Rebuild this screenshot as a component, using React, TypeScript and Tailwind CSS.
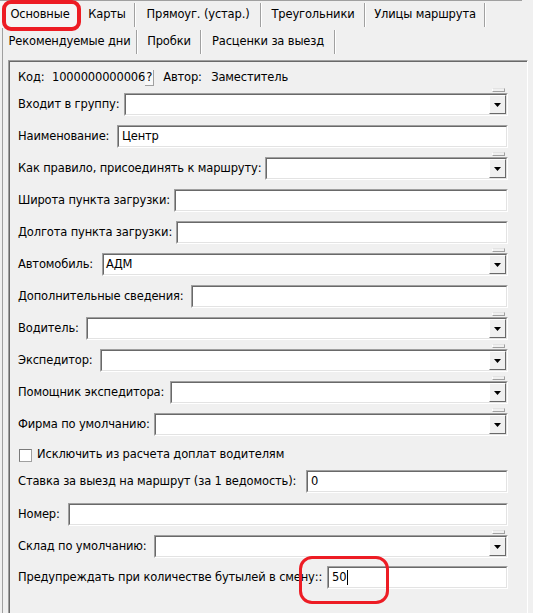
import React from "react";

const F = "font-['DejaVu_Sans',sans-serif]";

function Sunken({ children, className = "" }: { children?: React.ReactNode; className?: string }) {
  return (
    <div className={`h-[23px] border-t border-l border-t-[#a0a0a0] border-l-[#a0a0a0] border-b border-r border-b-white border-r-white ${className}`}>
      <div className="h-full border-t border-l border-t-[#696969] border-l-[#696969] border-b border-r border-b-[#e3e3e3] border-r-[#e3e3e3] bg-white flex items-center pl-[2px] relative">
        {children}
      </div>
    </div>
  );
}

function Combo({ value }: { value?: string }) {
  return (
    <div className="flex-1 relative">
      <Sunken>
        <span className="flex-1">{value}</span>
        <div className="w-[17px] h-[19px] mr-0 bg-[#f0f0f0] border-t border-l border-t-white border-l-white border-b border-r border-b-[#696969] border-r-[#696969] flex items-center justify-center">
          <svg width="7" height="4" viewBox="0 0 7 4"><path d="M0 0h7L3.5 4z" fill="#000" /></svg>
        </div>
      </Sunken>
      <div className="absolute right-[3px] top-[-5px] w-[13px] h-[4px] bg-[#f0f0f0] border-t border-t-[#e3e3e3] border-b border-b-[#a0a0a0] border-l border-l-white border-r border-r-[#a0a0a0]" />
    </div>
  );
}

function Row({ label, w, mt, children }: { label: string; w: number; mt: string; children: React.ReactNode }) {
  return (
    <div className={`flex items-center h-[23px] ${mt}`}>
      <div className="whitespace-nowrap shrink-0" style={{ width: w }}>{label}</div>
      {children}
    </div>
  );
}

export default function App() {
  const tab = "flex items-center justify-center whitespace-nowrap h-full";
  const sep = "w-[2px] h-[24px] border-l border-l-[#a0a0a0] border-r border-r-white self-center";
  return (
    <div className={`w-[533px] h-[613px] bg-[#f0f0f0] relative overflow-hidden text-[11.5px] tracking-[-0.15px] text-black ${F}`}>
      {/* top line */}
      <div className="h-[1px] w-[522px] bg-[#a0a0a0]" />
      {/* tab row 1 */}
      <div className="flex h-[27px]">
        <div className={`${tab} w-[80px] bg-[#f5f5f5]`}>Основные</div>
        <div className={`${tab} w-[54px]`}>Карты</div>
        <div className={sep} />
        <div className={`${tab} w-[124px]`}>Прямоуг. (устар.)</div>
        <div className={sep} />
        <div className={`${tab} w-[102px]`}>Треугольники</div>
        <div className={sep} />
        <div className={`${tab} w-[118px]`}>Улицы маршрута</div>
        <div className={sep} />
      </div>
      {/* tab row 2 */}
      <div className="flex h-[27px] border-l border-l-[#a0a0a0] ml-[2px]">
        <div className={`${tab} w-[133px]`}>Рекомендуемые дни</div>
        <div className={sep} />
        <div className={`${tab} w-[62px]`}>Пробки</div>
        <div className={sep} />
        <div className={`${tab} w-[132px]`}>Расценки за выезд</div>
        <div className={sep} />
      </div>
      {/* frame */}
      <div className="ml-[2px] border-l border-l-[#a0a0a0] pt-[5px] pl-[5px] h-[600px]">
        <div className="w-[520px] h-[600px] border-t border-l border-t-[#a0a0a0] border-l-[#a0a0a0] border-r border-r-white">
          <div className="h-full border-t border-l border-t-[#696969] border-l-[#696969] pl-[8px] pr-[19px]">
            <div className="flex items-center h-[22px] mt-[5px] whitespace-nowrap">
              <span className="w-[34px]">Код:</span>
              <span>1000000000006</span>
              <span className="inline-flex items-center justify-center w-[9px] h-[16px] leading-none border-r border-b border-r-[#a0a0a0] border-b-[#a0a0a0] bg-[#f8f8f8]">?</span>
              <span className="ml-[9px] w-[48px]">Автор:</span>
              <span>Заместитель</span>
            </div>
            <Row label="Входит в группу:" w={106} mt="mt-[4px]"><Combo /></Row>
            <Row label="Наименование:" w={99} mt="mt-[9px]">
              <Sunken className="flex-1"><span className="pl-[1px]">Центр</span></Sunken>
            </Row>
            <Row label="Как правило, присоединять к маршруту:" w={247} mt="mt-[9px]"><Combo /></Row>
            <Row label="Широта пункта загрузки:" w={156} mt="mt-[9px]"><Sunken className="flex-1" /></Row>
            <Row label="Долгота пункта загрузки:" w={158} mt="mt-[9px]"><Sunken className="flex-1" /></Row>
            <Row label="Автомобиль:" w={84} mt="mt-[9px]"><Combo value="АДМ" /></Row>
            <Row label="Дополнительные сведения:" w={173} mt="mt-[9px]"><Sunken className="flex-1" /></Row>
            <Row label="Водитель:" w={68} mt="mt-[9px]"><Combo /></Row>
            <Row label="Экспедитор:" w={82} mt="mt-[9px]"><Combo /></Row>
            <Row label="Помощник экспедитора:" w={152} mt="mt-[9px]"><Combo /></Row>
            <Row label="Фирма по умолчанию:" w={136} mt="mt-[9px]"><Combo /></Row>
            <div className="flex items-center h-[22px] mt-[8px] whitespace-nowrap">
              <div className="w-[13px] h-[13px] ml-[1px] bg-white border border-[#7a7a7a] border-b-[#a0a0a0] border-r-[#a0a0a0]" />
              <span className="ml-[5px]">Исключить из расчета доплат водителям</span>
            </div>
            <Row label="Ставка за выезд на маршрут (за 1 ведомость):" w={288} mt="mt-[4px]">
              <Sunken className="flex-1"><span className="pl-[1px]">0</span></Sunken>
            </Row>
            <Row label="Номер:" w={50} mt="mt-[10px]"><Sunken className="flex-1" /></Row>
            <Row label="Склад по умолчанию:" w={136} mt="mt-[9px]"><Combo /></Row>
            <Row label="Предупреждать при количестве бутылей в смену::" w={309} mt="mt-[8px]">
              <Sunken className="flex-1">
                <span className="pl-[1px]">50</span>
                <span className="w-[1px] h-[15px] bg-black ml-[1px]" />
              </Sunken>
            </Row>
          </div>
        </div>
      </div>
      {/* red annotation rings */}
      <div className="absolute left-[2px] top-[0px] w-[79px] h-[31px] border-[4px] border-[#ed1c24] rounded-[9px]" />
      <div className="absolute left-[299px] top-[556px] w-[90px] h-[48px] border-[3px] border-[#ed1c24] rounded-[13px]" />
    </div>
  );
}
